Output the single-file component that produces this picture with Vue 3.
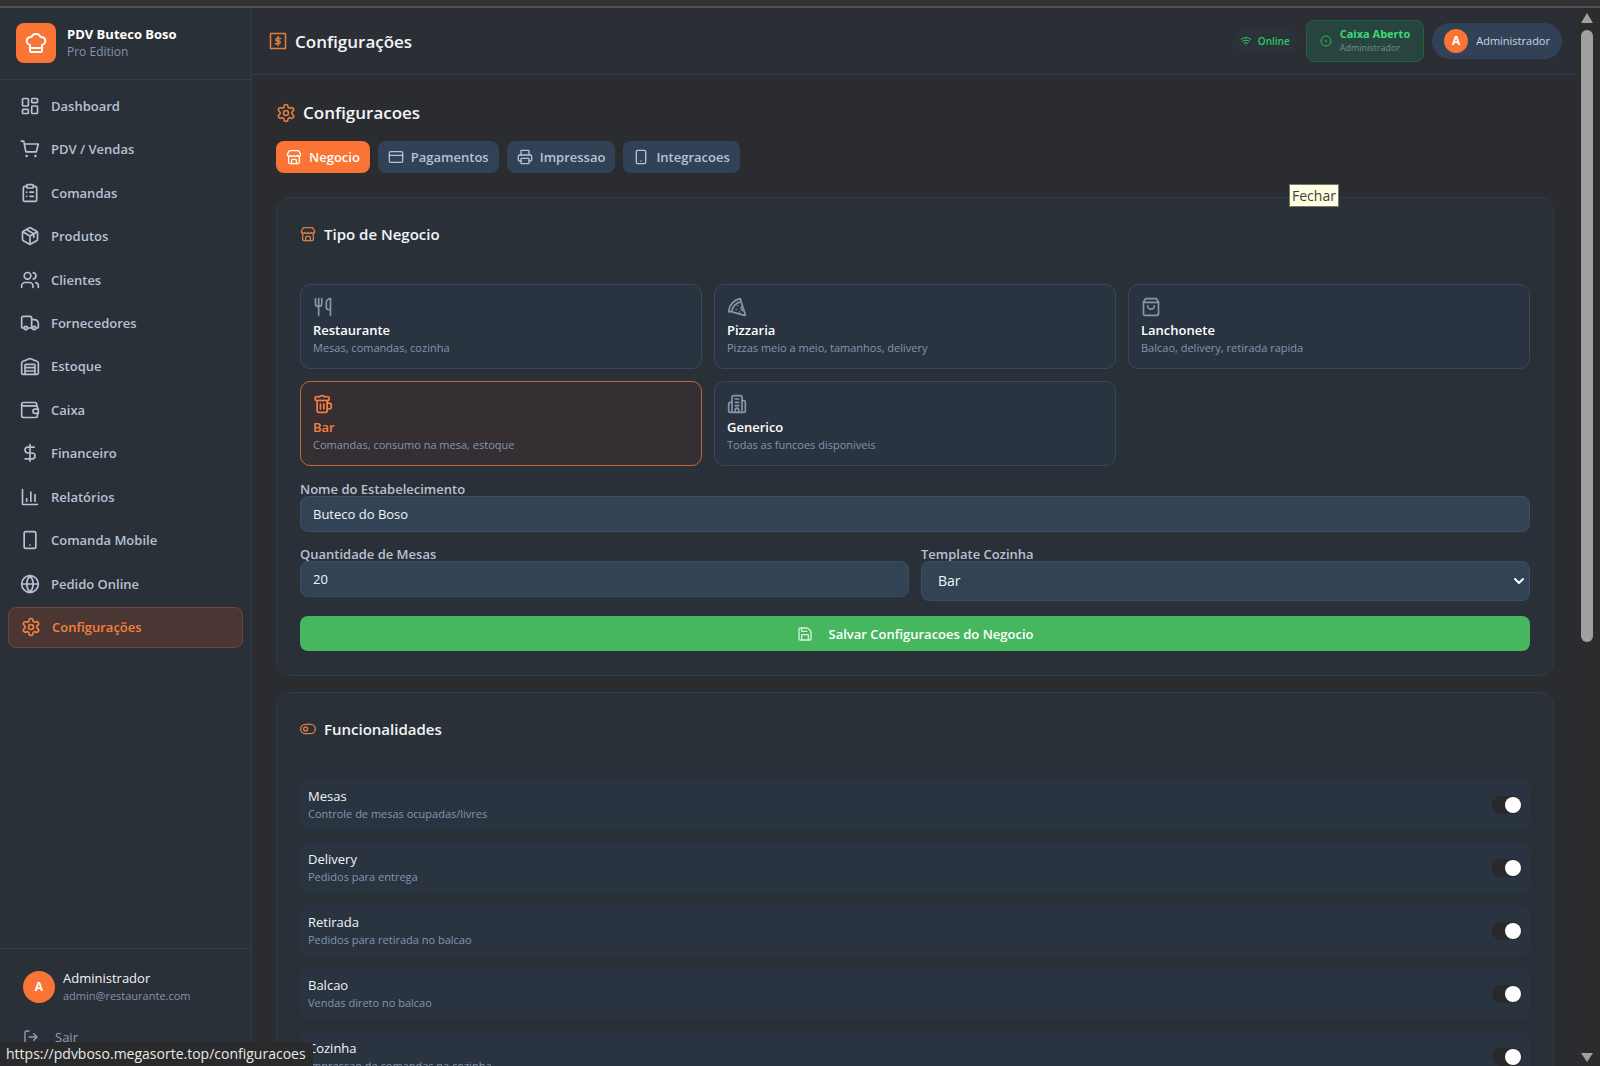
<script setup>
import { h, ref } from 'vue'

const glyphs = {
  chef: ['M6 13.9A4 4 0 0 1 7.4 6a5.1 5.1 0 0 1 9.2 0A4 4 0 0 1 18 13.9V20a1 1 0 0 1-1 1H7a1 1 0 0 1-1-1z', 'M6 17h12'],
  dashboard: ['M4 3h5a1 1 0 0 1 1 1v7a1 1 0 0 1-1 1H4a1 1 0 0 1-1-1V4a1 1 0 0 1 1-1z', 'M15 3h5a1 1 0 0 1 1 1v3a1 1 0 0 1-1 1h-5a1 1 0 0 1-1-1V4a1 1 0 0 1 1-1z', 'M15 12h5a1 1 0 0 1 1 1v7a1 1 0 0 1-1 1h-5a1 1 0 0 1-1-1v-7a1 1 0 0 1 1-1z', 'M4 16h5a1 1 0 0 1 1 1v3a1 1 0 0 1-1 1H4a1 1 0 0 1-1-1v-3a1 1 0 0 1 1-1z'],
  cart: ['M1.500 2.500h2.200a1 1 0 0 1 1 .8L7 15.500h12.500L22 6H5.300', 'M8 20.500h.01M18.500 20.500h.01M7.500 20.500a.5.5 0 1 0 1 0 .5.5 0 1 0-1 0M18 20.500a.5.5 0 1 0 1 0 .5.5 0 1 0-1 0'],
  clipboard: ['M8 4H6a2 2 0 0 0-2 2v14a2 2 0 0 0 2 2h12a2 2 0 0 0 2-2V6a2 2 0 0 0-2-2h-2', 'M9 2h6a1 1 0 0 1 1 1v2a1 1 0 0 1-1 1H9a1 1 0 0 1-1-1V3a1 1 0 0 1 1-1z', 'M12 11h4M12 16h4M8 11h.01M8 16h.01'],
  box: ['M11 21.700a2 2 0 0 0 2 0l7-4a2 2 0 0 0 1-1.700V8a2 2 0 0 0-1-1.700l-7-4a2 2 0 0 0-2 0l-7 4A2 2 0 0 0 3 8v8a2 2 0 0 0 1 1.700z', 'M12 22V12M3.300 7 12 12l8.700-5M7.500 4.300l9 5.100v4'],
  users: ['M15.500 21v-2a4 4 0 0 0-4-4H6a4 4 0 0 0-4 4v2', 'M5 7a4 4 0 1 0 8 0 4 4 0 1 0-8 0', 'M22 21v-2a4 4 0 0 0-3-3.900M16 3.100a4 4 0 0 1 0 7.800'],
  truck: ['M14 18V6a2 2 0 0 0-2-2H4a2 2 0 0 0-2 2v11a1 1 0 0 0 1 1h2', 'M9 18h6M19 18h2a1 1 0 0 0 1-1v-4.500a5 5 0 0 0-5-4.500h-3', 'M5 18a2 2 0 1 0 4 0 2 2 0 1 0-4 0M15 18a2 2 0 1 0 4 0 2 2 0 1 0-4 0'],
  warehouse: ['M22 8.300V20a2 2 0 0 1-2 2H4a2 2 0 0 1-2-2V8.300a2 2 0 0 1 1.200-1.800l8-3.300a2 2 0 0 1 1.600 0l8 3.300A2 2 0 0 1 22 8.300z', 'M6 22V11a1 1 0 0 1 1-1h10a1 1 0 0 1 1 1v11M6 14h12M6 18h12'],
  wallet: ['M20 7V5a2 2 0 0 0-2-2H4a2 2 0 0 0-2 2v14a2 2 0 0 0 2 2h15a2 2 0 0 0 2-2v-3', 'M2 5a2 2 0 0 0 2 2h15a2 2 0 0 1 2 2v2', 'M22 11v5h-4a2.500 2.500 0 0 1 0-5z'],
  dollar: ['M12 2v20', 'M17 5H9.500a3.500 3.500 0 0 0 0 7h5a3.500 3.500 0 0 1 0 7H6'],
  chart: ['M3 3v17a1 1 0 0 0 1 1h17', 'M8 17v-3M13 17V6M18 17V9'],
  mobile: ['M7 2h10a2 2 0 0 1 2 2v16a2 2 0 0 1-2 2H7a2 2 0 0 1-2-2V4a2 2 0 0 1 2-2z', 'M12 18h.01'],
  globe: ['M2 12a10 10 0 1 0 20 0 10 10 0 1 0-20 0', 'M12 2a15 15 0 0 0 0 20 15 15 0 0 0 0-20M2 12h20'],
  gear: ['M9.700 4.100a2.300 2.300 0 0 1 4.600 0 2.300 2.300 0 0 0 3.300 1.900 2.300 2.300 0 0 1 2.400 4 2.300 2.300 0 0 0 0 3.900 2.300 2.300 0 0 1-2.400 4 2.300 2.300 0 0 0-3.300 2 2.300 2.300 0 0 1-4.600 0 2.300 2.300 0 0 0-3.300-2 2.300 2.300 0 0 1-2.400-4 2.300 2.300 0 0 0 0-3.900 2.300 2.300 0 0 1 2.400-4 2.300 2.300 0 0 0 3.300-1.900', 'M9 12a3 3 0 1 0 6 0 3 3 0 1 0-6 0'],
  receipt: ['M2 2h20v20H2z', 'M15.500 8.500h-5a1.800 1.800 0 0 0 0 3.500h3a1.800 1.800 0 0 1 0 3.500h-5M12 6v12'],
  store: ['M4 10.500V20a2 2 0 0 0 2 2h12a2 2 0 0 0 2-2v-9.500', 'M2 8l2.500-4.500A2 2 0 0 1 6 2.500h12a2 2 0 0 1 1.500 1L22 8c0 4-4 4-5 1.500-1 2.500-4 2.500-5 0-1 2.500-4 2.500-5 0C6 12 2 12 2 8z', 'M8.500 22v-5a1.500 1.500 0 0 1 1.500-1.500h4a1.500 1.500 0 0 1 1.500 1.500v5'],
  card: ['M4 4h16a2 2 0 0 1 2 2v12a2 2 0 0 1-2 2H4a2 2 0 0 1-2-2V6a2 2 0 0 1 2-2z', 'M2 9.500h20'],
  printer: ['M6 18H4a2 2 0 0 1-2-2v-5a2 2 0 0 1 2-2h16a2 2 0 0 1 2 2v5a2 2 0 0 1-2 2h-2', 'M6 9V3a1 1 0 0 1 1-1h10a1 1 0 0 1 1 1v6M7 14h10a1 1 0 0 1 1 1v6a1 1 0 0 1-1 1H7a1 1 0 0 1-1-1v-6a1 1 0 0 1 1-1z'],
  cutlery: ['M3 2v6a3 3 0 0 0 3 3h1.500a3 3 0 0 0 3-3V2M6.800 2v20', 'M21 15V2a5 5 0 0 0-5 5v6a2 2 0 0 0 2 2h3zm0 0v7'],
  pizza: ['M2 16.500C3.500 9 9 3.500 16 2l.8 3.500C11 7 7 11 5.500 16.800L2 18z', 'M16.500 4.500 22 21a.8.8 0 0 1-1 1L5 17.500', 'M18.500 11a3 3 0 0 0 1.500 5.500M11 15v.01M13 10.500v.01M15 18v.01'],
  bag: ['M5.500 2h13L21 6v14a2 2 0 0 1-2 2H5a2 2 0 0 1-2-2V6z', 'M3 6.500h18M16 10.500a4 4 0 0 1-8 0'],
  beer: ['M17 11h2a3 3 0 0 1 3 3v1a3 3 0 0 1-3 3h-2', 'M9 12v6M13 12v6M5 8v12a2 2 0 0 0 2 2h8a2 2 0 0 0 2-2V8', 'M14 7.500c-1 0-1.400.5-3 .5S9 7.500 8 7.500 6.300 8 5 8a2.500 2.500 0 0 1 0-5c.8 0 1.600.2 2.300.5C8 2.500 9.500 2 11 2s2 .5 3 1.500C14.700 3.200 16 3 17 3a2.500 2.500 0 0 1 0 5c-1.300 0-2-.5-3-.5z'],
  building: ['M6 22V4a2 2 0 0 1 2-2h8a2 2 0 0 1 2 2v18z', 'M6 10H4a2 2 0 0 0-2 2v8a2 2 0 0 0 2 2h2M18 8h2a2 2 0 0 1 2 2v10a2 2 0 0 1-2 2h-2', 'M10 22v-3a2 2 0 0 1 4 0v3M10 6h4M10 10h4M10 14h4'],
  save: ['M15.200 3a2 2 0 0 1 1.400.6l3.800 3.800a2 2 0 0 1 .6 1.400V19a2 2 0 0 1-2 2H5a2 2 0 0 1-2-2V5a2 2 0 0 1 2-2z', 'M17 21v-7a1 1 0 0 0-1-1H8a1 1 0 0 0-1 1v7M7 3v4a1 1 0 0 0 1 1h7'],
  toggle: ['M8 5h8a7 7 0 0 1 0 14H8A7 7 0 0 1 8 5z', 'M5.500 12a3 3 0 1 0 6 0 3 3 0 1 0-6 0'],
  wifi: ['M12 20h.01M2 8.800a15 15 0 0 1 20 0M5 12.900a10 10 0 0 1 14 0M8.500 16.400a5 5 0 0 1 7 0'],
  target: ['M2 12a10 10 0 1 0 20 0 10 10 0 1 0-20 0', 'M11 12a1 1 0 1 0 2 0 1 1 0 1 0-2 0'],
  logout: ['M9 21H5a2 2 0 0 1-2-2V5a2 2 0 0 1 2-2h4', 'M16 17l5-5-5-5M21 12H9'],
  chevron: ['M4 8l8 8 8-8'],
}

const Icon = (props) =>
  h('svg', {
    width: props.size, height: props.size, viewBox: '0 0 24 24', fill: 'none',
    stroke: 'currentColor', 'stroke-width': props.weight || 2,
    'stroke-linecap': 'round', 'stroke-linejoin': 'round', 'aria-hidden': 'true',
  }, glyphs[props.name].map((d) => h('path', { d })))
Icon.props = ['name', 'size', 'weight']

const nav = [
  ['dashboard', 'Dashboard'], ['cart', 'PDV / Vendas'], ['clipboard', 'Comandas'],
  ['box', 'Produtos'], ['users', 'Clientes'], ['truck', 'Fornecedores'],
  ['warehouse', 'Estoque'], ['wallet', 'Caixa'], ['dollar', 'Financeiro'],
  ['chart', 'Relatórios'], ['mobile', 'Comanda Mobile'], ['globe', 'Pedido Online'],
  ['gear', 'Configurações'],
]
const tabs = [['store', 'Negocio'], ['card', 'Pagamentos'], ['printer', 'Impressao'], ['mobile', 'Integracoes']]
const tab = ref('Negocio')
const types = [
  ['cutlery', 'Restaurante', 'Mesas, comandas, cozinha'],
  ['pizza', 'Pizzaria', 'Pizzas meio a meio, tamanhos, delivery'],
  ['bag', 'Lanchonete', 'Balcao, delivery, retirada rapida'],
  ['beer', 'Bar', 'Comandas, consumo na mesa, estoque'],
  ['building', 'Generico', 'Todas as funcoes disponiveis'],
]
const type = ref('Bar')
const businessName = ref('Buteco do Boso')
const tables = ref('20')
const template = ref('Bar')
const features = ref([
  { name: 'Mesas', text: 'Controle de mesas ocupadas/livres', on: true },
  { name: 'Delivery', text: 'Pedidos para entrega', on: true },
  { name: 'Retirada', text: 'Pedidos para retirada no balcao', on: true },
  { name: 'Balcao', text: 'Vendas direto no balcao', on: true },
  { name: 'Cozinha', text: 'Impressao de comandas na cozinha', on: true },
])
</script>

<template>
  <div class="window">
    <div class="edge"></div>
    <div class="app">
      <aside class="sidebar">
        <div class="brand">
          <span class="logo"><Icon name="chef" size="24" /></span>
          <div>
            <strong class="brand-name">PDV Buteco Boso</strong>
            <span class="brand-sub">Pro Edition</span>
          </div>
        </div>
        <nav class="nav">
          <a v-for="[icon, label] in nav" :key="label" href="#" class="nav-item" :class="{ active: icon === 'gear' }">
            <Icon :name="icon" size="20" /><span>{{ label }}</span>
          </a>
        </nav>
        <div class="account">
          <div class="account-row">
            <span class="avatar large">A</span>
            <div>
              <span class="account-name">Administrador</span>
              <span class="account-mail">admin@restaurante.com</span>
            </div>
          </div>
          <button class="logout" type="button"><Icon name="logout" size="16" /><span>Sair</span></button>
        </div>
      </aside>

      <div class="content">
        <header class="topbar">
          <Icon name="receipt" size="18" />
          <h1>Configurações</h1>
          <div class="status">
            <span class="online"><Icon name="wifi" size="12" />Online</span>
            <button type="button" class="cash">
              <Icon name="target" size="12" />
              <span><b>Caixa Aberto</b><small>Administrador</small></span>
            </button>
            <button type="button" class="profile"><span class="avatar">A</span>Administrador</button>
          </div>
        </header>

        <main class="main">
          <h2 class="page-title"><Icon name="gear" size="20" /><span>Configuracoes</span></h2>
          <div class="tabs">
            <button v-for="[icon, label] in tabs" :key="label" type="button" class="tab" :class="{ active: tab === label }" @click="tab = label">
              <Icon :name="icon" size="16" />{{ label }}
            </button>
          </div>

          <section class="card">
            <h3><Icon name="store" size="16" /><span>Tipo de Negocio</span></h3>
            <div class="types">
              <button v-for="[icon, name, text] in types" :key="name" type="button" class="type" :class="{ active: type === name }" @click="type = name">
                <Icon :name="icon" size="20" />
                <span class="type-name">{{ name }}</span>
                <span class="hint">{{ text }}</span>
              </button>
            </div>
            <div class="field">
              <label for="nome">Nome do Estabelecimento</label>
              <input id="nome" v-model="businessName" type="text" />
            </div>
            <div class="pair">
              <div class="field">
                <label for="mesas">Quantidade de Mesas</label>
                <input id="mesas" v-model="tables" type="text" inputmode="numeric" />
              </div>
              <div class="field">
                <label for="template">Template Cozinha</label>
                <div class="select">
                  <select id="template" v-model="template"><option>Bar</option><option>Restaurante</option></select>
                  <Icon name="chevron" size="12" weight="4" />
                </div>
              </div>
            </div>
            <button type="button" class="save"><Icon name="save" size="16" />Salvar Configuracoes do Negocio</button>
          </section>

          <section class="card">
            <h3><Icon name="toggle" size="16" /><span>Funcionalidades</span></h3>
            <div class="features">
              <label v-for="item in features" :key="item.name" class="feature">
                <span>
                  <span class="feature-name">{{ item.name }}</span>
                  <span class="hint">{{ item.text }}</span>
                </span>
                <input v-model="item.on" type="checkbox" class="switch" />
              </label>
            </div>
          </section>
        </main>
      </div>

      <div class="scrollbar">
        <span class="arrow up"></span>
        <span class="thumb"></span>
        <span class="arrow down"></span>
      </div>
    </div>
    <div class="tooltip" role="tooltip">Fechar</div>
    <div class="link-status">https://pdvboso.megasorte.top/configuracoes</div>
  </div>
</template>

<style>
body { background: #2b2c2f; overflow: hidden; }
</style>

<style scoped>
.window, .window * { box-sizing: border-box; }
.window {
  display: flex; flex-direction: column; height: 100vh; position: relative; overflow: hidden;
  background: #2b2c2f; color: #f1f5f9;
  font-family: "Open Sans", "Noto Sans", sans-serif; font-size: 13px; line-height: 18px;
}
button, input, select { font: inherit; color: inherit; margin: 0; }
button { cursor: pointer; border: 0; }
svg { flex: none; display: block; }
h1, h2, h3 { margin: 0; font-weight: 600; }
.edge { flex: none; height: 8px; background: #333; border-bottom: 2px solid #505052; }
.app { flex: 1; min-height: 0; display: flex; }

.sidebar { width: 252px; flex: none; display: flex; flex-direction: column; background: #2a3037; border-right: 1px solid #2e3d4f; }
.brand { display: flex; align-items: center; gap: 11px; height: 72px; padding: 0 16px 2px; border-bottom: 1px solid #2e3d4f; }
.logo { width: 40px; height: 40px; border-radius: 8px; background: #f97435; color: #fff; display: grid; place-items: center; }
.brand-name, .brand-sub, .account-name, .account-mail { display: block; }
.brand-name { font-weight: 700; color: #fff; }
.brand-sub, .account-mail, .hint { font-size: 11px; color: #8394ae; }
.brand-sub { font-size: 12px; }
.nav { display: grid; grid-auto-rows: 1fr; gap: 2px; min-height: 563px; margin: 5px 8px 0; }
.nav-item { display: flex; align-items: center; gap: 11px; padding: 0 12px; color: #b6c2d3; font-weight: 600; text-decoration: none; border-radius: 8px; }
.nav-item.active { background: #4b3633; border: 1px solid #6d4637; color: #f4813f; }
.account { margin-top: auto; height: 118px; padding: 20px 23px 0; border-top: 1px solid #2e3d4f; }
.account-row { display: flex; align-items: center; gap: 8px; }
.avatar { width: 24px; height: 24px; flex: none; border-radius: 50%; background: #f97435; color: #fff; font-weight: 700; font-size: 12px; display: grid; place-items: center; }
.avatar.large { width: 32px; height: 32px; }
.logout { display: flex; align-items: center; gap: 16px; padding: 0; margin-top: 23px; background: none; color: #8fa0b6; }

.content { flex: 1; min-width: 0; display: flex; flex-direction: column; }
.topbar { flex: none; display: flex; align-items: center; height: 67px; padding: 0 16px 0 17px; background: #2c2e35; border-bottom: 1px solid #2e3d4f; color: #e27f3c; }
.topbar h1 { margin-left: 8px; padding-top: 2px; font-size: 17px; line-height: 24px; color: #f1f5f9; }
.status { margin-left: auto; display: flex; align-items: center; gap: 8px; font-size: 11px; }
.online { display: flex; align-items: center; gap: 6px; height: 22px; padding: 0 8px; border-radius: 11px; background: #2a3337; color: #31c768; font-size: 10px; font-weight: 600; }
.cash { display: flex; align-items: center; gap: 8px; height: 42px; padding: 0 13px; border: 1px solid #1f6146; border-radius: 8px; background: #27443f; color: #2fb565; text-align: left; }
.cash b, .cash small { display: block; line-height: 14px; }
.cash b { color: #42d678; }
.cash small { color: #71908d; font-size: 9px; }
.profile { display: flex; align-items: center; gap: 8px; height: 36px; padding: 0 12px; border-radius: 18px; background: #324256; color: #cbd5e1; font-weight: 500; }

.main { flex: 1; min-height: 0; overflow: hidden; padding: 24px; }
.page-title { display: flex; align-items: center; gap: 7px; font-size: 17px; line-height: 28px; }
.page-title svg, h3 svg { color: #d97f45; }
.tabs { display: flex; gap: 8px; margin: 14px 0 24px; }
.tab { display: flex; align-items: center; gap: 7px; height: 32px; padding: 0 10px; border-radius: 8px; background: #324256; color: #b6c2d3; font-weight: 600; }
.tab.active { background: #f97435; color: #fff; }
.card { padding: 23px 23px 24px; margin-bottom: 16px; border: 1px solid #2d3b4a; border-radius: 14px; background: #2a3037; }
.card h3 { display: flex; align-items: center; gap: 8px; margin-bottom: 37px; font-size: 15px; line-height: 26px; }
.types { display: grid; grid-template-columns: repeat(3, 1fr); gap: 12px; }
.type { display: flex; flex-direction: column; align-items: flex-start; height: 85px; padding: 12px; border: 1px solid #37485b; border-radius: 10px; background: #293440; color: #8597ae; text-align: left; }
.type-name { margin-top: 4px; color: #fff; font-weight: 600; }
.type.active { border-color: #c5683c; background: #352f34; color: #f4813f; }
.type.active .type-name { color: #f4813f; }
.field { display: flex; flex-direction: column; flex: 1; margin-top: 16px; }
.field label { font-size: 13px; line-height: 14px; font-weight: 600; color: #b6c2d3; }
.field input, .select select { width: 100%; height: 36px; padding: 0 12px; border: 1px solid #3d4e62; border-radius: 8px; background: #324355; outline: 0; }
.field input { font-weight: 500; }
.pair { display: flex; gap: 12px; }
.pair .field { margin-top: 15px; }
.select { position: relative; }
.select select { height: 40px; padding: 0 16px; font-size: 14px; font-weight: 500; appearance: none; }
.select svg { position: absolute; right: 5px; top: 14px; color: #fff; pointer-events: none; }
.save { display: flex; align-items: center; justify-content: center; gap: 16px; width: 100%; height: 35px; margin-top: 15px; border-radius: 8px; background: #47b75f; color: #fff; font-weight: 600; }
.save svg { opacity: 0.8; }
.features { display: flex; flex-direction: column; gap: 12px; }
.feature { display: flex; align-items: center; justify-content: space-between; height: 51px; padding: 0 8px; border-radius: 8px; background: #293440; }
.feature-name, .feature .hint { display: block; }
.feature-name { font-weight: 500; }
.switch { appearance: none; width: 30px; height: 18px; padding: 1px; border-radius: 9px; background: #29292a; display: flex; cursor: pointer; }
.switch::before { content: ""; width: 16px; height: 16px; border-radius: 50%; background: #fff; }
.switch:checked { justify-content: flex-end; }

.scrollbar { width: 22px; flex: none; display: flex; flex-direction: column; align-items: center; padding: 5px 6px 4px 2px; background: #2b2c2c; }
.arrow { width: 0; height: 0; border: 6px solid transparent; }
.up { border-top-width: 0; border-bottom: 10px solid #a0a0a0; }
.down { border-bottom-width: 0; border-top: 9px solid #a0a0a0; margin-top: auto; }
.thumb { width: 12px; height: calc(58% + 4px); margin-top: 7px; border-radius: 6px; background: #a0a0a0; }

.tooltip { position: absolute; left: 1289px; top: 184px; padding: 0 2px; border: 1px solid #77776f; background: #ffffe1; color: #3c3c3c; font-size: 14px; line-height: 21px; }
.link-status { position: absolute; left: 0; bottom: 0; padding: 0 7px 0 6px; border-top-right-radius: 4px; background: #292a2b; color: #e8e8e8; font-size: 14px; line-height: 24px; }
</style>
